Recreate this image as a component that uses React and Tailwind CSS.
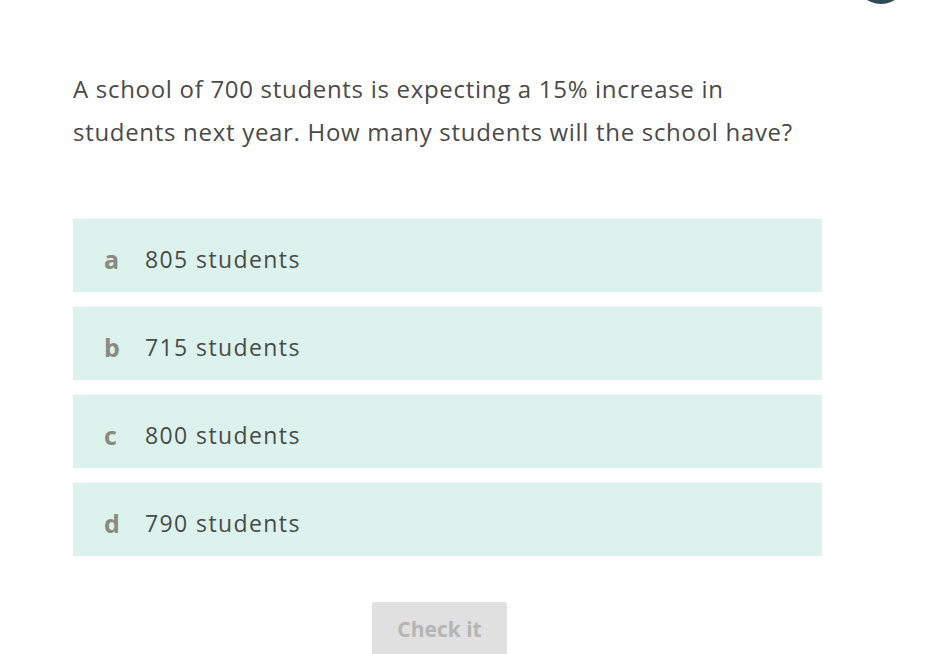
export default function App() {
  const opts = [
    ["a", "805 students"],
    ["b", "715 students"],
    ["c", "800 students"],
    ["d", "790 students"],
  ];
  return (
    <div className="relative w-[931px] h-[654px] overflow-hidden bg-white" style={{ fontFamily: "'Open Sans', sans-serif" }}>
      <div className="absolute left-[855px] top-[-48px] w-[52px] h-[52px] rounded-full bg-[#2f4a58]" />
      <div className="pl-[73px] pt-[67px] w-[822px]">
        <p className="text-[24px] leading-[43px] tracking-[0.7px] text-[#4a4a4a]">
          A school of 700 students is expecting a 15% increase in<br />students next year. How many students will the school have?
        </p>
        <div className="mt-[66px] flex flex-col gap-[15px]">
          {opts.map(([l, t]) => (
            <div key={l} className="h-[73px] bg-[#dcf2ec] flex items-center pl-[31px] pt-[8px]">
              <span className="w-[41px] text-[25px] font-bold text-[#8b8a80]">{l}</span>
              <span className="text-[23px] tracking-[1.4px] text-[#4a4a4a]">{t}</span>
            </div>
          ))}
        </div>
        <div className="mt-[46px] pl-[299px]">
          <div className="w-[135px] h-[56px] rounded-[3px] bg-[#e0e0e0] flex items-center justify-center text-[21px] font-bold text-[#b5b5b5]">
            Check it
          </div>
        </div>
      </div>
    </div>
  );
}
